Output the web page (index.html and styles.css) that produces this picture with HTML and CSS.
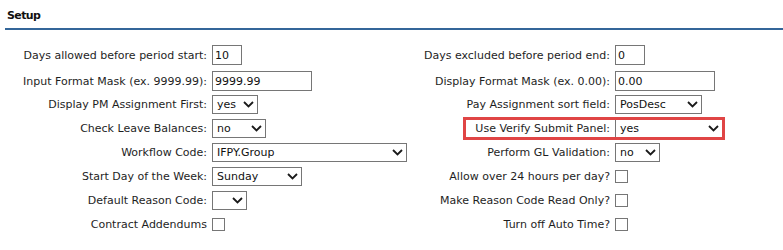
FILE: index.html
```html
<!DOCTYPE html>
<html>
<head>
<meta charset="utf-8">
<link rel="stylesheet" href="styles.css">
</head>
<body>
<div class="header">Setup</div>
<div class="form">
  <div class="col col-left">
    <div class="row r-in r-first"><label class="lbl">Days allowed before period start:</label><input class="txt" type="text" value="10" style="width:30px"></div>
    <div class="row r-in"><label class="lbl">Input Format Mask (ex. 9999.99):</label><input class="txt" type="text" value="9999.99" style="width:100px"></div>
    <div class="row"><label class="lbl">Display PM Assignment First:</label><span class="sel" style="width:46px"><span class="sel-text">yes</span><svg class="chev" width="11" height="7" viewBox="0 0 11 7"><polyline points="1,1 5.5,5.5 10,1" fill="none" stroke="#1a1a1a" stroke-width="1.8"/></svg></span></div>
    <div class="row"><label class="lbl">Check Leave Balances:</label><span class="sel" style="width:54px"><span class="sel-text">no</span><svg class="chev" width="11" height="7" viewBox="0 0 11 7"><polyline points="1,1 5.5,5.5 10,1" fill="none" stroke="#1a1a1a" stroke-width="1.8"/></svg></span></div>
    <div class="row"><label class="lbl">Workflow Code:</label><span class="sel" style="width:195px"><span class="sel-text">IFPY.Group</span><svg class="chev" width="11" height="7" viewBox="0 0 11 7"><polyline points="1,1 5.5,5.5 10,1" fill="none" stroke="#1a1a1a" stroke-width="1.8"/></svg></span></div>
    <div class="row"><label class="lbl">Start Day of the Week:</label><span class="sel" style="width:90px"><span class="sel-text">Sunday</span><svg class="chev" width="11" height="7" viewBox="0 0 11 7"><polyline points="1,1 5.5,5.5 10,1" fill="none" stroke="#1a1a1a" stroke-width="1.8"/></svg></span></div>
    <div class="row"><label class="lbl">Default Reason Code:</label><span class="sel" style="width:35px"><span class="sel-text"></span><svg class="chev" width="11" height="7" viewBox="0 0 11 7"><polyline points="1,1 5.5,5.5 10,1" fill="none" stroke="#1a1a1a" stroke-width="1.8"/></svg></span></div>
    <div class="row"><label class="lbl">Contract Addendums</label><input class="chk" type="checkbox"></div>
  </div>
  <div class="col col-right">
    <div class="row r-in r-first"><label class="lbl">Days excluded before period end:</label><input class="txt" type="text" value="0" style="width:30px"></div>
    <div class="row r-in"><label class="lbl">Display Format Mask (ex. 0.00):</label><input class="txt" type="text" value="0.00" style="width:100px"></div>
    <div class="row"><label class="lbl">Pay Assignment sort field:</label><span class="sel" style="width:87px"><span class="sel-text">PosDesc</span><svg class="chev" width="11" height="7" viewBox="0 0 11 7"><polyline points="1,1 5.5,5.5 10,1" fill="none" stroke="#1a1a1a" stroke-width="1.8"/></svg></span></div>
    <div class="row row-hl"><label class="lbl">Use Verify Submit Panel:</label><span class="sel" style="width:108px"><span class="sel-text">yes</span><svg class="chev" width="11" height="7" viewBox="0 0 11 7"><polyline points="1,1 5.5,5.5 10,1" fill="none" stroke="#1a1a1a" stroke-width="1.8"/></svg></span><span class="hl-box"></span></div>
    <div class="row"><label class="lbl">Perform GL Validation:</label><span class="sel" style="width:45px"><span class="sel-text">no</span><svg class="chev" width="11" height="7" viewBox="0 0 11 7"><polyline points="1,1 5.5,5.5 10,1" fill="none" stroke="#1a1a1a" stroke-width="1.8"/></svg></span></div>
    <div class="row"><label class="lbl">Allow over 24 hours per day?</label><input class="chk" type="checkbox"></div>
    <div class="row"><label class="lbl">Make Reason Code Read Only?</label><input class="chk" type="checkbox"></div>
    <div class="row"><label class="lbl">Turn off Auto Time?</label><input class="chk" type="checkbox"></div>
  </div>
</div>
</body>
</html>
```
FILE: styles.css
```css
html, body {
  margin: 0;
  padding: 0;
  background: #ffffff;
}
body {
  font-family: "DejaVu Sans", Verdana, sans-serif;
  font-size: 11px;
  color: #1e1e1e;
  overflow: hidden;
}
.header {
  margin-left: 5px;
  padding: 9px 0 6px 2px;
  line-height: 13px;
  font-weight: bold;
  letter-spacing: -0.6px;
  color: #111;
  border-bottom: 2px solid #346699;
}
.form {
  display: flex;
  padding-top: 15px;
}
.col {
  display: flex;
  flex-direction: column;
}
.col-left {
  width: 392px;
  padding-left: 8px;
}
.col-left .lbl {
  width: 199px;
}
.col-right .lbl {
  width: 210px;
}
.row {
  display: flex;
  align-items: center;
  gap: 5px;
  height: 19px;
  margin-bottom: 5px;
  position: relative;
}
.row.r-in {
  height: 20px;
  margin-bottom: 4px;
}
.row.r-first {
  margin-bottom: 6px;
}
.lbl {
  flex: none;
  text-align: right;
  white-space: nowrap;
  line-height: 13px;
}
.txt {
  box-sizing: border-box;
  height: 20px;
  margin: 0;
  padding: 0 2px;
  border: 1px solid #767676;
  border-radius: 0;
  font-family: "DejaVu Sans", Verdana, sans-serif;
  font-size: 11px;
  color: #111;
  background: #fff;
  outline: none;
}
.sel {
  box-sizing: border-box;
  height: 19px;
  border: 1px solid #767676;
  background: #fff;
  display: flex;
  align-items: center;
  padding-left: 4px;
  position: relative;
  color: #111;
  flex: none;
}
.sel-text {
  line-height: 13px;
  white-space: nowrap;
}
.chev {
  position: absolute;
  right: 3px;
  top: 5px;
}
.chk {
  appearance: none;
  -webkit-appearance: none;
  box-sizing: border-box;
  width: 13px;
  height: 13px;
  margin: 0;
  border: 1px solid #767676;
  border-radius: 0;
  background: #fff;
  flex: none;
}
.hl-box {
  position: absolute;
  left: 63px;
  top: -2px;
  width: 262px;
  height: 23px;
  box-sizing: border-box;
  border: 3px solid #e04545;
  pointer-events: none;
}
```
